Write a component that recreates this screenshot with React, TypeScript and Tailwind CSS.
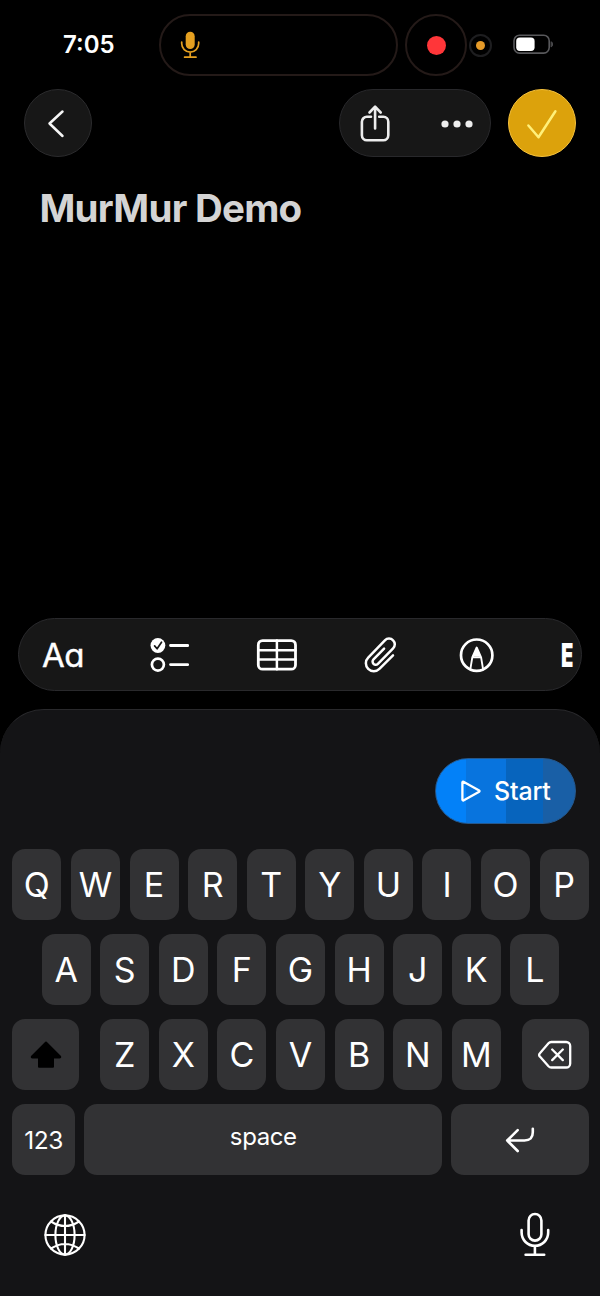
import type { ReactNode } from "react";

type IconProps = { box: string; className: string; label: string; children: ReactNode };

function Icon({ box, className, label, children }: IconProps) {
  return (
    <svg
      viewBox={box}
      className={`block shrink-0 ${className}`}
      fill="none"
      stroke="currentColor"
      strokeLinecap="round"
      strokeLinejoin="round"
      role="img"
      aria-label={label}
    >
      {children}
    </svg>
  );
}

function StatusBar() {
  return (
    <header className="flex h-[89px] items-start pt-[14px]">
      <div className="ml-[63px] w-24 pt-[17px] text-[24px] leading-7 font-semibold">7:05</div>
      <div className="flex h-[62px] w-[239px] items-center rounded-full border-2 border-[#241a18] pl-[19px]">
        <Icon box="0 0 20 28" className="h-7 w-5 text-[#e5a020]" label="Microphone">
          <rect x="5.7" y="0.8" width="9" height="17.2" rx="4.5" fill="currentColor" stroke="none" />
          <path d="M1.7 11v1.6a8.5 8.5 0 0 0 17 0V11M10.2 21.2v5M4.6 26.2h11.4" strokeWidth="1.7" />
        </Icon>
      </div>
      <div className="ml-[7px] flex h-[62px] w-[62px] items-center justify-center rounded-full border-2 border-[#241a18]">
        <span className="size-[19px] rounded-full bg-[#ff3639]" />
      </div>
      <div className="mt-[19.5px] ml-[2px] flex size-[23px] items-center justify-center rounded-full border-2 border-[#1e1e20]">
        <span className="size-[9px] rounded-full bg-[#e59a28]" />
      </div>
      <Icon box="0 0 40 20" className="mt-5 ml-[20.5px] h-5 w-10" label="Battery">
        <rect x="1" y="1.3" width="35.2" height="17.8" rx="5.5" stroke="#58585b" strokeWidth="1.6" />
        <rect x="3.2" y="3.5" width="18.4" height="13.4" rx="3.6" fill="#fff" stroke="none" />
        <path d="M38.3 7.7c2 .9 2 4.3 0 5.2z" fill="#58585b" stroke="#58585b" strokeWidth="0.6" />
      </Icon>
    </header>
  );
}

function NavBar() {
  return (
    <nav className="flex h-[68px] items-center px-6">
      <button className="flex size-[68px] items-center rounded-full border border-[#2b2b2d] bg-[#171717] pl-[22px]">
        <Icon box="0 0 18 30" className="h-[30px] w-[18px] text-[#f5f5f5]" label="Back">
          <path d="M15.5 3.5 2.5 15.5 15.5 28" strokeWidth="2.5" />
        </Icon>
      </button>
      <div className="ml-auto flex h-[68px] w-[152px] items-center justify-between rounded-full border border-[#28282b] bg-[#171717] pr-[17.5px] pl-[20px]">
        <Icon box="0 0 30 38" className="h-[38px] w-[30px] text-[#ededed]" label="Share">
          <path d="M11 12.8H6.9a5 5 0 0 0-5 5v13.4a5 5 0 0 0 5 5h16.4a5 5 0 0 0 5-5V17.8a5 5 0 0 0-5-5h-4.1M15.1 24.5V3M9.5 8.5l5.6-5.8 5.6 5.8" strokeWidth="2.6" />
        </Icon>
        <Icon box="0 0 32 8" className="mt-px h-2 w-8 text-[#ededed]" label="More">
          <g fill="currentColor" stroke="none">
            <circle cx="4" cy="4" r="3.6" />
            <circle cx="16" cy="4" r="3.6" />
            <circle cx="28" cy="4" r="3.6" />
          </g>
        </Icon>
      </div>
      <button className="ml-[17px] flex size-[68px] items-center justify-center rounded-full border border-[#f6c13c] bg-[#dca20c]">
        <Icon box="0 0 32 32" className="size-8 text-[#fff07a]" label="Done">
          <path d="M2.4 18.5 12.5 30.2 29.4 4.2" strokeWidth="2.5" />
        </Icon>
      </button>
    </nav>
  );
}

function FormatBar() {
  return (
    <div className="mx-[18px] flex h-[73px] items-center overflow-hidden rounded-full border border-[#29292c] bg-[#171717] pt-px pl-[23px]">
      <span className="w-[107.5px] pt-px text-[33px] leading-none tracking-[-0.5px] [-webkit-text-stroke:0.4px_white] [font-feature-settings:'cv11','ss03']">Aa</span>
      <Icon box="0 0 40 36" className="h-9 w-10" label="Checklist">
        <circle cx="8.9" cy="8.5" r="7.4" fill="currentColor" stroke="none" />
        <path d="m5.6 8.9 2.5 2.9 4.4-6.6" stroke="#171717" strokeWidth="1.7" />
        <circle cx="8.9" cy="27.6" r="6" strokeWidth="2.7" />
        <path d="M21.5 8.5h17.2M21.5 27.6h17.2" strokeWidth="2.8" />
      </Icon>
      <Icon box="0 0 42 34" className="ml-[66.5px] h-[34px] w-[42px]" label="Table">
        <rect x="2.3" y="2.6" width="37.2" height="28.6" rx="4.3" strokeWidth="2.8" />
        <path d="M2.3 12.2h37.2M2.3 21.6h37.2M20.9 2.6v28.6" strokeWidth="2.5" />
      </Icon>
      <Icon box="364 635 36 39" className="ml-[65.5px] h-[39px] w-9" label="Attach">
        <path
          d="m394 655.4-13.6 13.4a7.9 7.9 0 0 1-11.2 0a7.9 7.9 0 0 1 0-11.2l16.7-17.3a5.7 5.7 0 0 1 8.2 0a5.7 5.7 0 0 1 0 8.1l-15.2 15.4a3.1 3.1 0 0 1-4.4 0a3.1 3.1 0 0 1 0-4.4l10.6-10.8"
          strokeWidth="2.5"
        />
      </Icon>
      <Icon box="460 636 36 36" className="ml-[60px] size-9" label="Markup">
        <circle cx="477.7" cy="654.2" r="15.7" strokeWidth="2.7" />
        <path d="M471.3 668.3 473.3 656.3H482.1L484.1 668.3M473.3 656.3 477.7 646.5 482.1 656.3" strokeWidth="1.9" />
        <path d="M473.8 655.5 477.7 646.4 481.6 655.5Z" fill="currentColor" stroke="none" />
      </Icon>
      <span className="ml-[65.5px] origin-left scale-x-[0.61] text-[33px] leading-9 font-black">E</span>
    </div>
  );
}

function Key({ children, className = "w-[49px]" }: { children: ReactNode; className?: string }) {
  return (
    <button className={`flex h-[71px] shrink-0 items-center justify-center rounded-[13px] bg-[#323234] pt-px text-[34px] leading-none ${className}`}>
      {children}
    </button>
  );
}

function Letters({ keys }: { keys: string }) {
  return (
    <div className="flex gap-[9.6px]">
      {keys.split("").map((k) => (
        <Key key={k}>{k}</Key>
      ))}
    </div>
  );
}

function Keyboard() {
  return (
    <section className="flex flex-1 flex-col rounded-t-[44px] border-t border-[#29292c] bg-[#141416] pt-12">
      <button className="mr-[24.5px] flex h-[66px] w-[140.5px] items-center self-end rounded-full border border-[#25588d] bg-[linear-gradient(90deg,#0381f8_0_30px,#0874de_30px_70px,#0764bd_70px_107px,#195fa6_107px)] pl-[24px] text-[25px] font-medium tracking-[-0.2px]">
        <Icon box="0 0 22 24" className="mr-3 h-6 w-[22px]" label="Play">
          <path d="M2.4 3.4v17.4a.7.7 0 0 0 1 .6L19.2 12.7a.7.7 0 0 0 0-1.2L3.4 2.8a.7.7 0 0 0-1 .6z" strokeWidth="2.3" />
        </Icon>
        <span className="pt-0.5">Start</span>
      </button>
      <div className="mt-[25px] flex flex-col items-center gap-[14.1px] pr-[11px] pl-3">
        <Letters keys="QWERTYUIOP" />
        <Letters keys="ASDFGHJKL" />
        <div className="flex gap-[21px]">
          <Key className="w-[67px]">
            <Icon box="0 0 34 30" className="h-[30px] w-[34px] text-black" label="Shift">
              <path d="M17 2.5 31 16.4c.5.7.2 1.1-.5 1.1H24v9.3H10v-9.3H3.5c-.7 0-1-.4-.5-1.1z" fill="currentColor" strokeWidth="2" />
            </Icon>
          </Key>
          <Letters keys="ZXCVBNM" />
          <Key className="w-[67px]">
            <Icon box="0 0 36 30" className="h-[30px] w-9" label="Delete">
              <path d="M14.3 2h14.9a4 4 0 0 1 4 4v17.5a4 4 0 0 1-4 4H14.3a4 4 0 0 1-2.8-1.2L2.9 16.6a2.5 2.5 0 0 1 0-3.4l8.6-9.9A4 4 0 0 1 14.3 2zM15.2 9.5l10.6 10.6M25.8 9.5 15.2 20.1" strokeWidth="2.3" />
            </Icon>
          </Key>
        </div>
        <div className="flex gap-[9.2px]">
          <Key className="w-[63px] text-[24.5px]! tracking-[-0.4px]">123</Key>
          <Key className="w-[358px] pb-1.5 text-[24px]! tracking-[-0.4px]">space</Key>
          <Key className="w-[137.5px]">
            <Icon box="0 0 32 28" className="h-7 w-8" label="Return">
              <path d="M28.8 2.8v3.4q0 8.3-8.3 8.3H3.2M13.7 4.1 3.2 14.5 13.7 25" strokeWidth="2.6" />
            </Icon>
          </Key>
        </div>
      </div>
      <div className="mt-[36px] flex items-start justify-between pr-[49px] pl-[43px]">
        <Icon box="-22 -22 44 44" className="mt-[2px] size-11" label="Globe">
          <g strokeWidth="2.1">
            <circle r="19.6" />
            <ellipse rx="9.6" ry="19.6" />
            <path d="M-19.6 0h39.2M0-19.6v39.2M-14-13.5Q0-4.5 14-13.5M-14 13.5Q0 4.5 14 13.5" />
          </g>
        </Icon>
        <Icon box="519 1210 32 46" className="h-[46px] w-8" label="Dictate">
          <rect x="528.6" y="1213" width="12.8" height="26.6" rx="6.4" strokeWidth="2.6" />
          <path d="M521.6 1229v2.6c0 7.4 6 13.2 13.3 13.2s13.3-5.8 13.3-13.2V1229M534.9 1245v8.6M525.6 1253.7h18.6" strokeWidth="2.6" />
        </Icon>
      </div>
    </section>
  );
}

export default function App() {
  return (
    <main className="flex h-[1296px] w-[600px] flex-col overflow-hidden bg-black font-['Inter','Liberation_Sans',sans-serif] text-white">
      <StatusBar />
      <NavBar />
      <div className="h-[460.5px] px-[39.5px] pt-[27px]">
        <h1 className="text-[38.5px] leading-[48px] font-bold tracking-[-0.75px] text-[#d4d4d4]">MurMur Demo</h1>
      </div>
      <FormatBar />
      <div className="h-[18.5px] shrink-0" />
      <Keyboard />
    </main>
  );
}
